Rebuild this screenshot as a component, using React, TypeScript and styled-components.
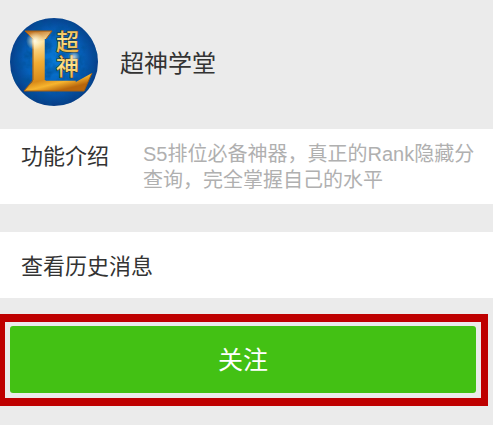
import React from "react";
import styled, { createGlobalStyle } from "styled-components";

const GlobalStyle = createGlobalStyle`
  *, *::before, *::after { box-sizing: border-box; }
  html { background: #ffffff; }
  body {
    margin: 0;
    font-family: "Liberation Sans", "Noto Sans CJK SC", sans-serif;
    color: #333333;
  }
`;

const Page = styled.main`
  display: flex;
  flex-direction: column;
  min-height: 100vh;
  margin-right: 9px;
  background: #ebebeb;
`;

const Profile = styled.header`
  display: flex;
  align-items: center;
  gap: 22px;
  padding: 18px 10px 23px;
`;

const Avatar = styled.svg`
  display: block;
  flex: none;
  width: 88px;
  height: 88px;
`;

const Name = styled.h1`
  margin: 0;
  padding-top: 4px;
  font-size: 24px;
  line-height: 32px;
  font-weight: 400;
`;

const Intro = styled.section`
  display: flex;
  align-items: flex-start;
  gap: 34px;
  padding: 12px 12px 11px 21px;
  background: #ffffff;
`;

const Label = styled.h2`
  flex: none;
  margin: 0;
  font-size: 22px;
  line-height: 32px;
  font-weight: 400;
`;

const Description = styled.p`
  flex: 1;
  margin: 0;
  font-size: 20px;
  line-height: 26px;
  color: #b0b0b0;
`;

const HistoryLink = styled.a`
  display: block;
  margin-top: 28px;
  padding: 19px 21px 15px;
  background: #ffffff;
  color: inherit;
  font-size: 22px;
  line-height: 32px;
  text-decoration: none;
`;

const Highlight = styled.div`
  margin: 16px 5px 0 0;
  padding: 4px 5px 5px;
  border: 8px solid #be0000;
  border-right-width: 7px;
  border-left-width: 5px;
`;

const FollowButton = styled.button`
  display: block;
  width: 100%;
  padding: 18px 16px 16px;
  border: 0;
  border-radius: 3px;
  background: #43c114;
  color: #ffffff;
  font: inherit;
  font-size: 25px;
  line-height: 33px;
  cursor: pointer;
`;

function Emblem() {
  return (
    <Avatar viewBox="0 0 88 88" role="img" aria-label="超神学堂">
      <defs>
        <radialGradient id="sky" cx="50%" cy="48%" r="52%">
          <stop offset="0" stopColor="#0879d6" />
          <stop offset="0.6" stopColor="#0561bb" />
          <stop offset="1" stopColor="#073b84" />
        </radialGradient>
        <linearGradient id="gold" gradientUnits="userSpaceOnUse" x1="20" y1="13" x2="36" y2="76">
          <stop offset="0" stopColor="#b9691a" />
          <stop offset="0.2" stopColor="#ffe3a0" />
          <stop offset="0.5" stopColor="#f0ac35" />
          <stop offset="0.78" stopColor="#d98a18" />
          <stop offset="0.88" stopColor="#f7b52f" />
          <stop offset="1" stopColor="#b8660c" />
        </linearGradient>
        <linearGradient id="foil" x1="0" y1="0" x2="0" y2="1">
          <stop offset="0" stopColor="#d89a2a" />
          <stop offset="0.5" stopColor="#ffe68c" />
          <stop offset="1" stopColor="#dda02d" />
        </linearGradient>
        <radialGradient id="glint">
          <stop offset="0" stopColor="#fffbe6" />
          <stop offset="1" stopColor="#fff2c0" stopOpacity="0" />
        </radialGradient>
        <filter id="mottle" x="0" y="0" width="100%" height="100%">
          <feTurbulence type="fractalNoise" baseFrequency="0.12" numOctaves="3" seed="4" />
          <feColorMatrix values="0 0 0 0 0  0 0 0 0 0.08  0 0 0 0 0.3  1.6 0 0 0 -0.6" />
          <feComposite in2="SourceGraphic" operator="in" />
        </filter>
      </defs>
      <circle cx="44" cy="44" r="44" fill="url(#sky)" />
      <circle cx="44" cy="44" r="44" filter="url(#mottle)" />
      <g fill="url(#gold)">
        <text
          x="17"
          y="72"
          fontFamily="Liberation Sans, sans-serif"
          fontWeight="700"
          fontSize="84"
        >
          L
        </text>
        <polygon points="15,13 42,13 36,21 23,21" />
        <polygon points="14,73 24,62 35,62 38,65 64,65 82,55 74,73" />
        <path
          d="M15 13H42L36 21M15 13L23 21V62L14 73H74L82 55"
          fill="none"
          stroke="#a45c10"
          strokeWidth="1"
        />
      </g>
      <circle cx="25" cy="23" r="9" fill="url(#glint)" />
      <g
        fontFamily="Noto Sans CJK SC, sans-serif"
        fontWeight="500"
        fontSize="23"
        fill="url(#foil)"
        stroke="#3d3420"
        strokeWidth="1"
        paintOrder="stroke"
      >
        <text x="46" y="32">超</text>
        <text x="46" y="57">神</text>
      </g>
      <circle cx="64" cy="39" r="6" fill="url(#glint)" opacity="0.7" />
    </Avatar>
  );
}

export default function App() {
  return (
    <>
      <GlobalStyle />
      <Page>
        <Profile>
          <Emblem />
          <Name>超神学堂</Name>
        </Profile>
        <Intro>
          <Label>功能介绍</Label>
          <Description>
            S5排位必备神器，真正的Rank隐藏分查询，完全掌握自己的水平
          </Description>
        </Intro>
        <HistoryLink href="#history">查看历史消息</HistoryLink>
        <Highlight>
          <FollowButton type="button">关注</FollowButton>
        </Highlight>
      </Page>
    </>
  );
}
